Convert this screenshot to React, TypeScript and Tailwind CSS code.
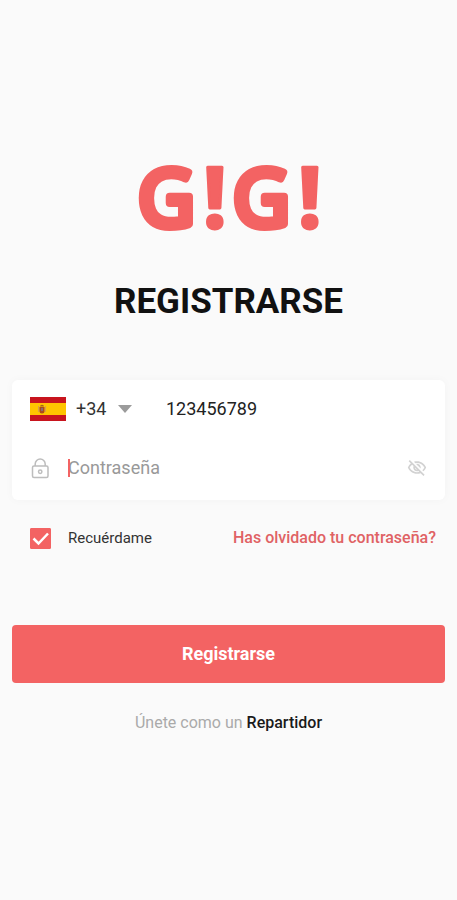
import { useState } from "react";

function Logo() {
  return (
    <svg
      role="img"
      aria-label="G!G!"
      viewBox="0 -8 192 118"
      className="h-[118px] w-[192px] font-['Noto_Sans','Open_Sans',sans-serif]"
      fill="#f36363"
      stroke="#f36363"
      strokeLinejoin="round"
    >
      <g className="text-[78px] font-normal" strokeWidth="8">
        <text x="5" y="82">G</text>
        <text x="100" y="82">G</text>
      </g>
      <g className="text-[84px] font-bold" strokeWidth="3">
        <text x="70" y="84">!</text>
        <text x="165" y="84">!</text>
      </g>
    </svg>
  );
}

function SpainFlag() {
  return (
    <svg viewBox="0 0 36 24" aria-hidden="true" className="h-6 w-9 shrink-0">
      <rect width="36" height="24" fill="#c8141e" />
      <rect y="6" width="36" height="12" fill="#ffc400" />
      <rect x="8" y="9" width="1" height="6" fill="#d9a04a" />
      <rect x="15" y="9" width="1" height="6" fill="#d9a04a" />
      <path d="M9.500 10h5v4a2.500 2.500 0 0 1-5 0z" fill="#ad4a1c" />
      <path d="M10 9.500a2 1.800 0 0 1 4 0z" fill="#a8601a" />
      <rect x="11" y="11" width="2" height="3" fill="#8c6a70" />
    </svg>
  );
}

function LockIcon() {
  return (
    <svg
      viewBox="0 0 18 22"
      aria-hidden="true"
      className="h-[22px] w-[18px]"
      fill="none"
      stroke="#bdbdbd"
      strokeWidth="1.500"
    >
      <rect x="1.500" y="9" width="15.500" height="11.500" rx="1.500" />
      <path d="M4.200 9V7a5 5 0 0 1 10 0v2" />
      <circle cx="9.200" cy="14.700" r="1.700" />
    </svg>
  );
}

function EyeOffIcon() {
  return (
    <svg viewBox="0 0 24 24" aria-hidden="true" className="size-5" fill="#d2d2d2">
      <path d="M12 6c3.790 0 7.170 2.130 8.820 5.500-.590 1.220-1.420 2.270-2.410 3.120l1.410 1.410c1.390-1.230 2.490-2.770 3.180-4.530C21.270 7.110 17 4 12 4c-1.270 0-2.490.200-3.640.570l1.650 1.650C10.660 6.090 11.320 6 12 6zm-1.070 1.140L13 9.210c.570.250 1.030.710 1.280 1.280l2.070 2.070c.080-.340.140-.700.140-1.070C16.500 9.010 14.480 7 12 7c-.370 0-.720.050-1.070.140zM2.010 3.870l2.680 2.680C3.060 7.830 1.770 9.530 1 11.500 2.730 15.890 7 19 12 19c1.520 0 2.980-.290 4.320-.820l3.420 3.420 1.410-1.410L3.420 2.450 2.010 3.870zm7.500 7.500l2.610 2.610c-.040.010-.080.020-.120.020-1.380 0-2.500-1.120-2.500-2.500 0-.050.010-.080.010-.130zm-3.400-3.400l1.750 1.750c-.230.550-.360 1.150-.360 1.780 0 2.480 2.020 4.500 4.500 4.500.630 0 1.230-.130 1.770-.360l.980.980c-.880.240-1.800.380-2.750.380-3.790 0-7.170-2.130-8.820-5.500.700-1.430 1.720-2.610 2.930-3.530z" />
    </svg>
  );
}

export default function App() {
  const [remember, setRemember] = useState(true);
  const [visible, setVisible] = useState(false);
  const [password, setPassword] = useState("");

  return (
    <main className="min-h-screen bg-[#fafafa] px-3 pt-34 pb-10 font-[Roboto,sans-serif] text-[#111111]">
      <div className="flex justify-center">
        <Logo />
      </div>
      <h1 className="mt-7 text-center text-[35px] leading-10 font-bold">REGISTRARSE</h1>

      <form onSubmit={(e) => e.preventDefault()}>
        <div className="mt-[58px] rounded-md bg-white pb-[2px] shadow-[0_0_10px_rgba(0,0,0,0.03)]">
          <div className="flex h-[58px] items-center pr-4 pl-[18px]">
            <SpainFlag />
            <div className="relative ml-2 w-[58px]">
              <select
                aria-label="Prefijo"
                className="w-full appearance-none bg-transparent pl-[2px] text-lg leading-6 text-[#333333] outline-none"
              >
                <option>+34</option>
              </select>
              <svg
                viewBox="0 0 14 8"
                aria-hidden="true"
                className="pointer-events-none absolute top-2 right-0 h-2 w-[14px]"
              >
                <path d="M0 0h14L7 8z" fill="#9b9b9b" />
              </svg>
            </div>
            <input
              type="tel"
              aria-label="Teléfono"
              defaultValue="123456789"
              className="ml-[34px] min-w-0 flex-1 bg-transparent text-lg leading-6 text-[#222222] outline-none"
            />
          </div>
          <div className="flex h-[60px] items-center px-[18px]">
            <div className="flex w-[38px] shrink-0 pl-[1px]">
              <LockIcon />
            </div>
            <div className="relative flex min-w-0 flex-1 items-center">
              <input
                type={visible ? "text" : "password"}
                aria-label="Contraseña"
                placeholder="Contraseña"
                value={password}
                onChange={(e) => setPassword(e.target.value)}
                className="w-full bg-transparent text-lg leading-6 caret-[#f36363] outline-none placeholder:text-[#999999]"
              />
              <span className="pointer-events-none absolute left-0 h-[18px] w-[2px] bg-[#f36363]" />
            </div>
            <button type="button" aria-label="Mostrar contraseña" onClick={() => setVisible(!visible)}>
              <EyeOffIcon />
            </button>
          </div>
        </div>

        <div className="mt-6 flex h-7 items-center justify-between pr-[9px] pl-[18px]">
          <label className="flex items-center gap-[17px] text-[15px] leading-5 text-[#333333]">
            <span className="relative flex size-[21px]">
              <input
                type="checkbox"
                checked={remember}
                onChange={(e) => setRemember(e.target.checked)}
                className="peer size-full appearance-none rounded-[1px] border border-[#f36363] checked:bg-[#f36363]"
              />
              <svg
                viewBox="0 0 21 21"
                aria-hidden="true"
                className="pointer-events-none absolute inset-0 hidden size-full peer-checked:block"
                fill="none"
                stroke="#ffffff"
                strokeWidth="2.500"
              >
                <path d="M3.500 10.500l5 5L18 5.500" />
              </svg>
            </span>
            Recuérdame
          </label>
          <a href="#recuperar" className="text-base leading-5 font-medium text-[#e06264]">
            Has olvidado tu contraseña?
          </a>
        </div>

        <button
          type="submit"
          className="mt-[73px] h-[58px] w-full rounded bg-[#f36363] text-lg font-bold text-white"
        >
          Registrarse
        </button>
      </form>

      <p className="mt-[30px] text-center text-base leading-5 text-[#aaaaaa]">
        Únete como un{" "}
        <a href="#repartidor" className="font-medium text-[#1a1a1a]">
          Repartidor
        </a>
      </p>
    </main>
  );
}
